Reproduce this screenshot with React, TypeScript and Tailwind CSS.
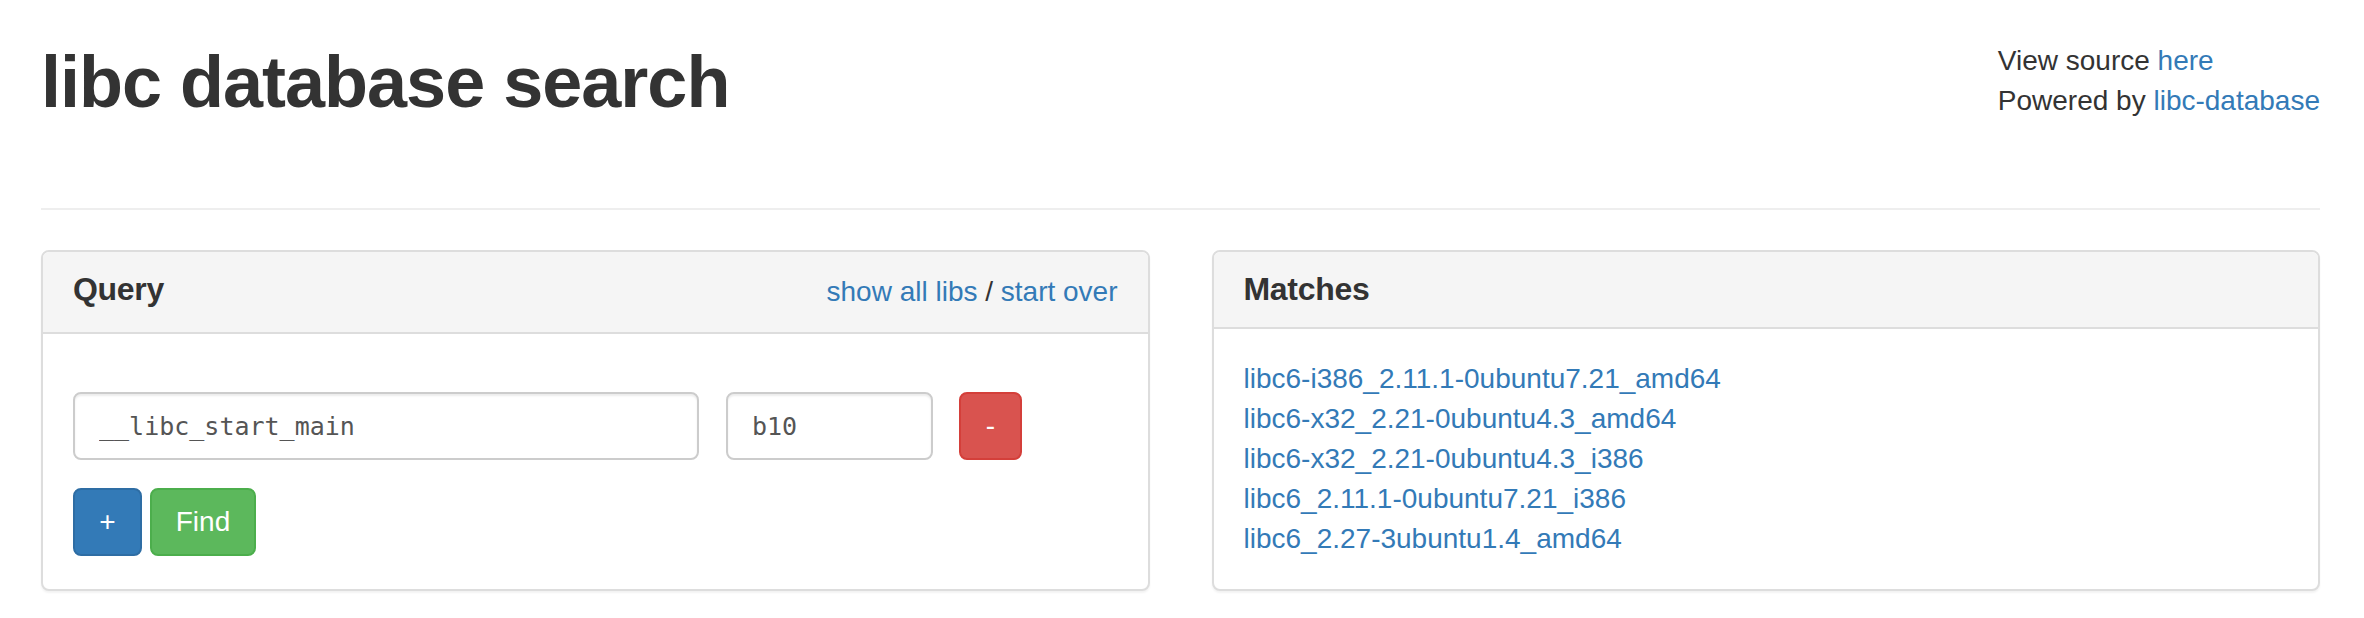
// libc database search — Bootstrap 3 look, rendered at 2x
const matches = [
  "libc6-i386_2.11.1-0ubuntu7.21_amd64",
  "libc6-x32_2.21-0ubuntu4.3_amd64",
  "libc6-x32_2.21-0ubuntu4.3_i386",
  "libc6_2.11.1-0ubuntu7.21_i386",
  "libc6_2.27-3ubuntu1.4_amd64",
];

const sans = "font-['Liberation_Sans','Helvetica_Neue',Arial,sans-serif]";

function Panel({
  title,
  right,
  children,
  bodyClass,
}: {
  title: string;
  right?: React.ReactNode;
  children: React.ReactNode;
  bodyClass: string;
}) {
  return (
    <div className="border-2 border-[#ddd] rounded-[8px] bg-white shadow-[0_2px_2px_rgba(0,0,0,0.05)] overflow-hidden">
      <div className="flex items-start justify-between bg-[#f5f5f5] border-b-2 border-[#ddd] px-[30px] py-[20px]">
        <h3 className="text-[32px] leading-[35px] font-bold text-[#333] tracking-[-0.3px]">{title}</h3>
        {right}
      </div>
      <div className={bodyClass}>{children}</div>
    </div>
  );
}

export default function App() {
  return (
    <div className={`${sans} bg-white text-[#333] text-[28px] leading-[40px] min-h-screen pl-[41px] pr-[44px] pt-[41px] pb-[40px]`}>
      {/* Header */}
      <div className="flex justify-between items-start h-[127px]">
        <h1 className="mt-[2px] text-[72px] leading-[79px] font-bold tracking-[-1px]">libc database search</h1>
        <div className="text-left">
          <div>
            View source <a className="text-[#337ab7]" href="#">here</a>
          </div>
          <div>
            Powered by <a className="text-[#337ab7]" href="#">libc-database</a>
          </div>
        </div>
      </div>

      <div className="mt-[40px] border-t-2 border-[#eee]" />

      <div className="mt-[40px] grid grid-cols-2 gap-[62px]">
        <Panel
          title="Query"
          bodyClass="px-[30px] pt-[58px] pb-[30px]"
          right={
            <div className="text-[28px] leading-[40px]">
              <a className="text-[#337ab7]" href="#">show all libs</a> / <a className="text-[#337ab7]" href="#">start over</a>
            </div>
          }
        >
          <div className="flex items-center">
            <input
              readOnly
              defaultValue="__libc_start_main"
              className="w-[626px] h-[68px] px-[24px] border-2 border-[#ccc] rounded-[8px] shadow-[inset_0_2px_2px_rgba(0,0,0,0.075)] font-['DejaVu_Sans_Mono',monospace] text-[25px] text-[#555] outline-none"
            />
            <input
              readOnly
              defaultValue="b10"
              className="ml-[27px] w-[207px] h-[68px] px-[24px] border-2 border-[#ccc] rounded-[8px] shadow-[inset_0_2px_2px_rgba(0,0,0,0.075)] font-['DejaVu_Sans_Mono',monospace] text-[25px] text-[#555] outline-none"
            />
            <button className="ml-[26px] w-[63px] h-[68px] bg-[#d9534f] border-2 border-[#d43f3a] rounded-[8px] text-white text-[28px]">
              -
            </button>
          </div>
          <div className="mt-[28px] flex gap-[8px]">
            <button className="w-[69px] h-[68px] bg-[#337ab7] border-2 border-[#2e6da4] rounded-[8px] text-white text-[28px]">
              +
            </button>
            <button className="w-[106px] h-[68px] bg-[#5cb85c] border-2 border-[#4cae4c] rounded-[8px] text-white text-[28px]">
              Find
            </button>
          </div>
        </Panel>

        <Panel title="Matches" bodyClass="px-[30px] py-[30px]">
          {matches.map((m) => (
            <div key={m}>
              <a className="text-[#337ab7]" href="#">{m}</a>
            </div>
          ))}
        </Panel>
      </div>
    </div>
  );
}
